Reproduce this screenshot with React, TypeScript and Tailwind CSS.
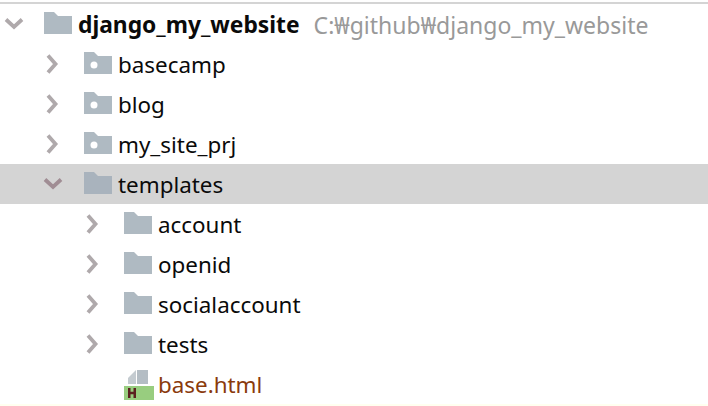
import React from "react";

function Chevron({ open, dark }: { open?: boolean; dark?: boolean }) {
  return (
    <svg width="20" height="20" viewBox="0 0 20 20" fill="none" className="shrink-0">
      <path
        d={open ? "M2 5.5L10 13L18 5.5" : "M5 1.5L12.5 10L5 18.5"}
        stroke={dark ? "#a08d94" : "#afa9ab"}
        strokeWidth="3.8"
      />
    </svg>
  );
}

function Folder({ dot, tint }: { dot?: boolean; tint?: boolean }) {
  return (
    <svg width="28" height="22" viewBox="0 0 28 22" className="mb-0.5 shrink-0">
      <path d="M0 0H10L14 4H28V22H0Z" fill={tint ? "#a9b3bd" : "#afbac2"} />
      {dot && <circle cx="10" cy="13" r="3.5" fill="#ffffff" />}
    </svg>
  );
}

function HtmlIcon() {
  return (
    <svg width="30" height="30" viewBox="0 0 30 30" className="mt-0.5 shrink-0">
      <path d="M4 8L12 0V14H4Z" fill="#c4cbd0" />
      <path d="M13 0H24V14H13Z" fill="#b4bdc4" />
      <rect x="0" y="16" width="30" height="14" fill="#98cd7f" />
      <path d="M5.25 18V28M10.75 18V28M5 23H11" stroke="#5b2020" strokeWidth="2.5" fill="none" />
    </svg>
  );
}

function Row({
  pad,
  selected,
  children,
}: {
  pad: string;
  selected?: boolean;
  children: React.ReactNode;
}) {
  return (
    <div className={`flex h-10 items-center ${pad} ${selected ? "bg-[#d4d4d4]" : ""}`}>
      {children}
    </div>
  );
}

export default function App() {
  const modules = ["basecamp", "blog", "my_site_prj"];
  const folders = ["account", "openid", "socialaccount", "tests"];

  return (
    <div
      className="h-[406px] w-[708px] overflow-hidden bg-white text-[22.4px] text-[#0a0a0a]"
      style={{ fontFamily: '"Noto Sans", "Noto Sans CJK KR", sans-serif' }}
    >
      <div className="h-1 pt-0.5">
        <div className="h-0.5 bg-[#d4d4d4]" />
      </div>

      <Row pad="pl-[4px]">
        <Chevron open />
        <div className="ml-5 flex">
          <Folder />
        </div>
        <span className="ml-1.5 pt-0.5 text-[22.8px] font-bold">django_my_website</span>
        <span className="ml-3.5 pt-0.5 text-[23px] text-[#999999]">C:₩github₩django_my_website</span>
      </Row>

      {modules.map((name) => (
        <Row key={name} pad="pl-[43px]">
          <Chevron />
          <div className="ml-[21px] flex">
            <Folder dot />
          </div>
          <span className="ml-1.5 pt-0.5">{name}</span>
        </Row>
      ))}

      <Row pad="pl-[43px]" selected>
        <Chevron open dark />
        <div className="ml-[21px] flex">
          <Folder tint />
        </div>
        <span className="ml-1.5 pt-0.5">templates</span>
      </Row>

      {folders.map((name) => (
        <Row key={name} pad="pl-[83px]">
          <Chevron />
          <div className="ml-[21px] flex">
            <Folder />
          </div>
          <span className="ml-1.5 pt-0.5">{name}</span>
        </Row>
      ))}

      <Row pad="pl-[124px]">
        <HtmlIcon />
        <span className="ml-1 pt-0.5 text-[#8a3a0c]">base.html</span>
      </Row>

      <div className="h-0.5 bg-[#fffff0]" />
    </div>
  );
}
